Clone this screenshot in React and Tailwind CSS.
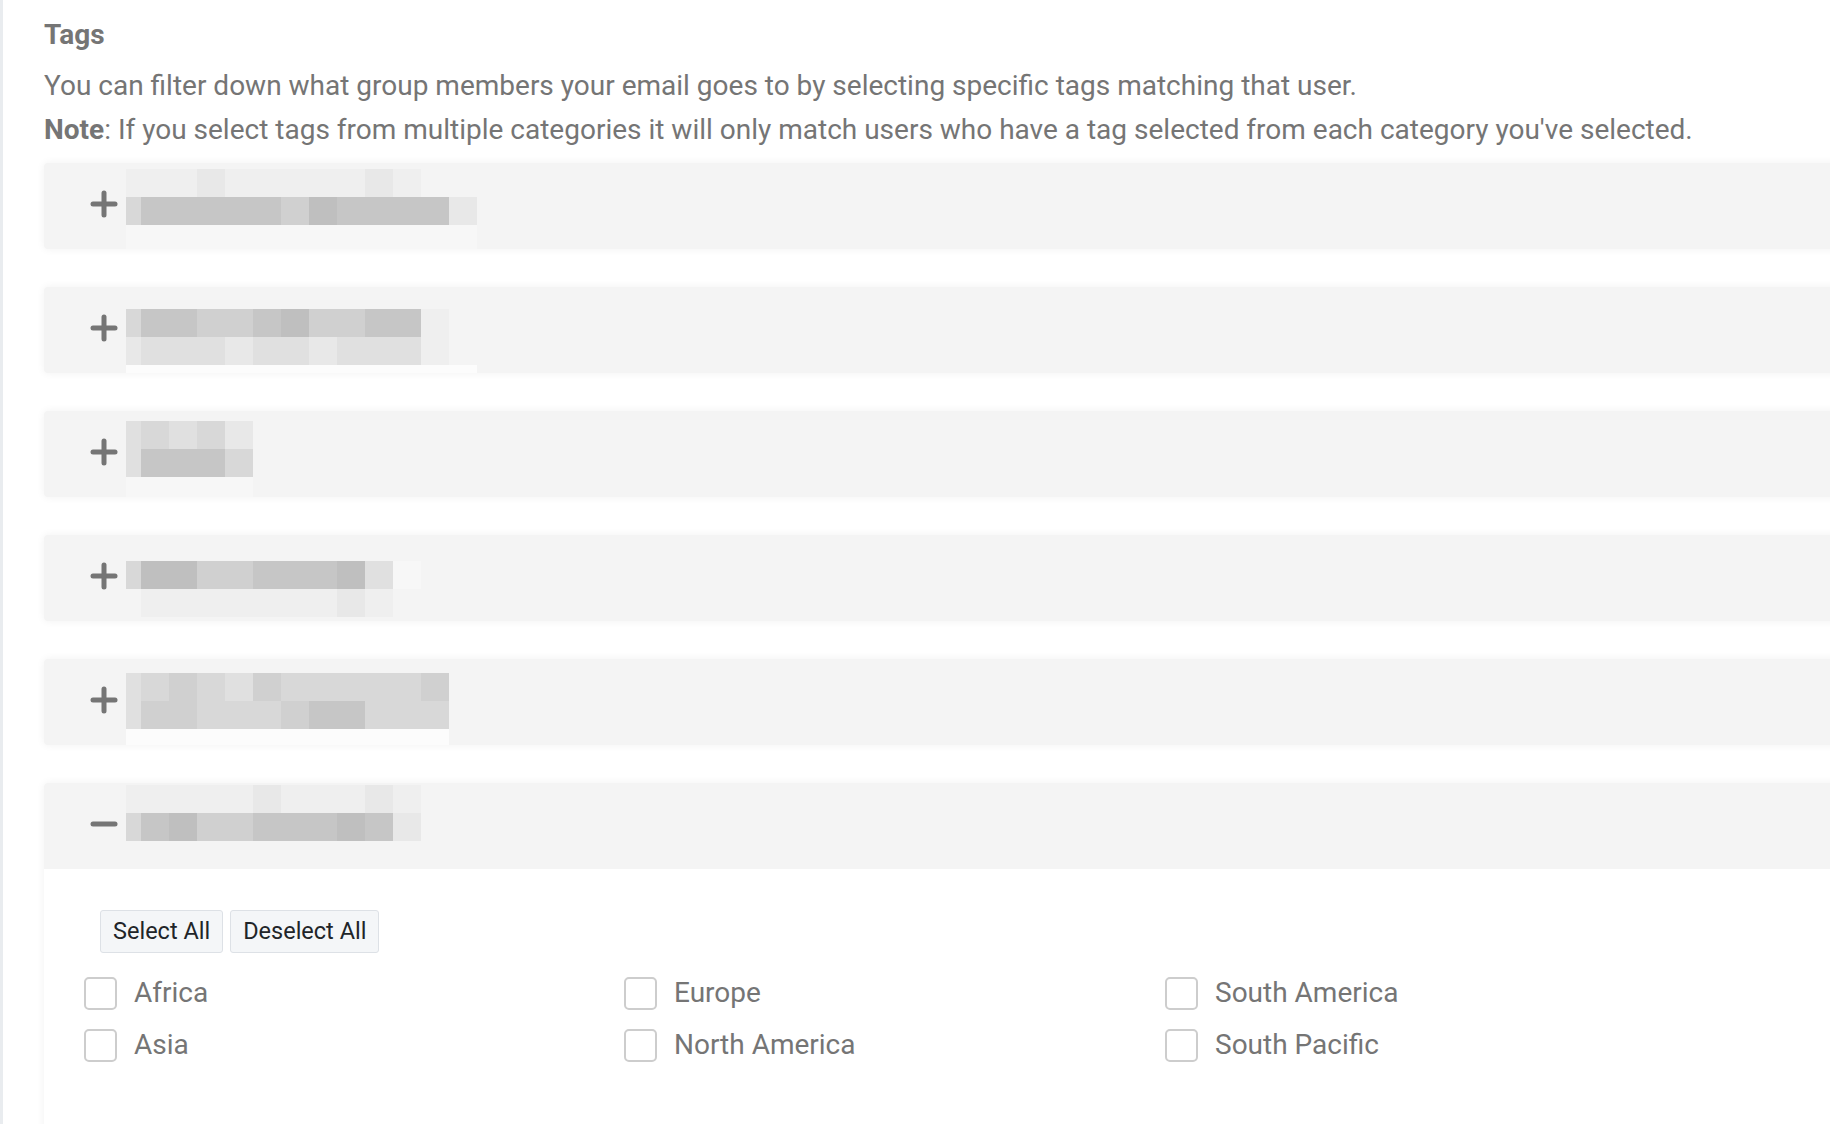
import React from 'react';

// pixelated (redacted) category names: one string per 28px band, one digit per cell
const shades = {
    '1': 'bg-[#bfbfbf]',
    '2': 'bg-[#c6c6c6]',
    '3': 'bg-[#d0d0d0]',
    '4': 'bg-[#d8d8d8]',
    '5': 'bg-[#e0e0e0]',
    '6': 'bg-[#e8e8e8]',
    '7': 'bg-[#efefef]',
    '8': 'bg-[#f4f4f4]',
    '9': 'bg-[#f7f7f7]',
    '0': 'bg-[#fcfcfc]',
};

const categories = [
    { offset: 'mt-[6px]', bands: ['7776777776788', '4222223122226', '9999999999999'] },
    { offset: 'mt-[22px]', bands: ['4223321332278', '655565565557', '0000000000000'] },
    { offset: 'mt-[10px]', bands: ['54546', '52224', '99999'] },
    { offset: 'mt-[26px]', bands: ['41133222159', '8777777767'] },
    { offset: 'mt-[14px]', bands: ['543453444443', '533444322444', '000000000000'] },
    { offset: 'mt-[2px]', bands: ['77777677767', '42133222126'], open: true },
];

const regions = [
    ['Africa', 'Europe', 'South America'],
    ['Asia', 'North America', 'South Pacific'],
];

const Mosaic = ({ offset, bands }) => (
    <div className={`ml-[8px] flex flex-col ${offset}`}>
        {bands.map((band, i) => (
            <div key={i} className="flex h-[28px]">
                {band.split('').map((c, j) => (
                    <div key={j} className={`h-full ${j === 0 ? 'w-[15px]' : 'w-[28px]'} ${shades[c]}`} />
                ))}
            </div>
        ))}
    </div>
);

const Toggle = ({ open }) => (
    <svg viewBox="0 0 28 28" className="w-[28px] h-[28px] shrink-0 mt-[27px]" fill="none" stroke="#757575" strokeWidth="5" strokeLinecap="round">
        <path d="M3 14h22" />
        {!open && <path d="M14 3v22" />}
    </svg>
);

const Header = ({ cat }) => (
    <div className={`h-[86px] bg-[#f4f4f4] flex items-start pl-[46px] overflow-hidden ${cat.open ? 'rounded-t-[4px]' : 'rounded-[4px] shadow-[0_0_8px_rgba(0,0,0,0.06)]'}`}>
        <Toggle open={cat.open} />
        <Mosaic offset={cat.offset} bands={cat.bands} />
    </div>
);

const Checkbox = ({ label }) => (
    <label className="flex items-center">
        <span className="w-[33px] h-[33px] border-2 border-[#cdcdcd] rounded-[5px] bg-white shrink-0" />
        <span className="ml-[17px] text-[28px] leading-[36px] text-[#757575]">{label}</span>
    </label>
);

export default function App() {
    return (
        <div className="min-h-screen bg-white flex overflow-hidden font-['Roboto',sans-serif]">
            <div className="w-[3px] shrink-0 bg-[#e9ecef]" />
            <div className="flex-1 pl-[41px] pt-[17px]">
                <h3 className="text-[28px] leading-[36px] font-bold text-[#757575]">Tags</h3>
                <p className="mt-[11px] text-[28px] leading-[44px] text-[#757575]">
                    You can filter down what group members your email goes to by selecting specific tags matching that user.
                    <br />
                    <span className="font-bold">Note</span>: If you select tags from multiple categories it will only match users who have a tag selected from each category you've selected.
                </p>

                <div className="mt-[11px] mr-[-20px] flex flex-col gap-[38px]">
                    {categories.map((cat, i) =>
                        cat.open ? (
                            <div key={i} className="rounded-t-[4px] shadow-[0_0_8px_rgba(0,0,0,0.06)] bg-white">
                                <Header cat={cat} />
                                <div className="pt-[41px] pb-[120px] pl-[40px]">
                                    <div className="ml-[16px] flex gap-[7px]">
                                        <button className="h-[43px] px-[12px] text-[23.5px] text-[#212529] bg-[#f4f6f8] border border-[#dde1e6] rounded-[3px]">Select All</button>
                                        <button className="h-[43px] px-[12px] text-[23.5px] text-[#212529] bg-[#f4f6f8] border border-[#dde1e6] rounded-[3px]">Deselect All</button>
                                    </div>
                                    <div className="mt-[22px] flex flex-col gap-[16px]">
                                        {regions.map((row, r) => (
                                            <div key={r} className="grid grid-cols-[540px_541px_1fr]">
                                                {row.map((name) => (
                                                    <Checkbox key={name} label={name} />
                                                ))}
                                            </div>
                                        ))}
                                    </div>
                                </div>
                            </div>
                        ) : (
                            <Header key={i} cat={cat} />
                        )
                    )}
                </div>
            </div>
        </div>
    );
}
